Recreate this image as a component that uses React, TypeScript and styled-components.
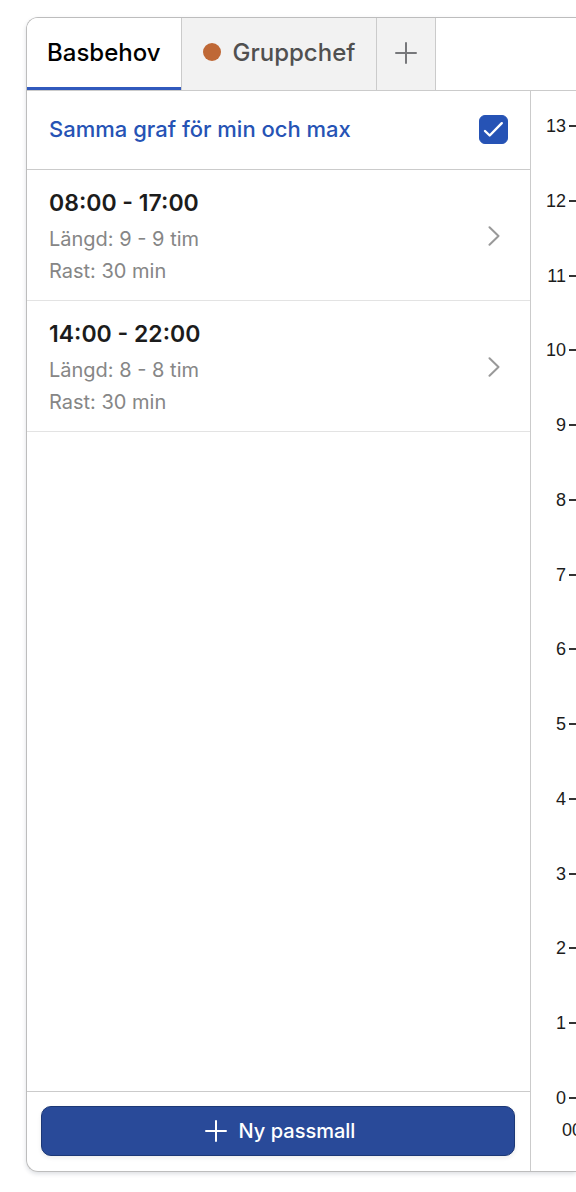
import React, { useState } from 'react';
import styled, { createGlobalStyle } from 'styled-components';

const colors = {
  text: '#1c1c1c',
  muted: '#868686',
  icon: '#999999',
  line: '#cbcbcb',
  lineLight: '#e3e3e3',
  frame: '#bdbdbd',
  tab: '#f2f2f2',
  blue: '#2653b5',
  button: '#294a99',
};

const GlobalStyle = createGlobalStyle`
  *, *::before, *::after {
    box-sizing: border-box;
  }

  body {
    margin: 0;
    background: #fff;
    color: ${colors.text};
    font-family: Inter, 'Liberation Sans', sans-serif;
  }

  button, input {
    font: inherit;
  }
`;

const Page = styled.main`
  display: flex;
  min-height: 100vh;
  padding: 17px 0 20px 26px;
  overflow: hidden;
`;

const Panel = styled.section`
  flex: 1;
  min-width: 0;
  display: flex;
  flex-direction: column;
  border: 1px solid ${colors.frame};
  border-right: none;
  border-radius: 12px 0 0 12px;
  box-shadow: 0 2px 4px rgba(30, 40, 70, 0.15);
`;

const TabBar = styled.div`
  display: flex;
  height: 73px;
  border-bottom: 1px solid ${colors.line};
`;

const Tab = styled.button<{ $active?: boolean }>`
  display: flex;
  align-items: center;
  gap: 12px;
  padding: 0 21px 4px;
  border: none;
  border-right: 1px solid ${colors.line};
  background: ${({ $active }) => ($active ? '#fff' : colors.tab)};
  box-shadow: ${({ $active }) => ($active ? `inset 0 -3px 0 #3159bd` : 'none')};
  color: ${({ $active }) => ($active ? '#000' : '#505050')};
  font-size: 24px;
  font-weight: 500;
  cursor: pointer;

  &:first-child {
    padding: 0 20px 4px;
    border-top-left-radius: 11px;
  }
`;

const AddTab = styled(Tab)`
  padding: 0 18px 2px;
  color: #77787b;
`;

const Dot = styled.span`
  width: 18px;
  height: 18px;
  border-radius: 50%;
  background: #bf6836;
`;

const Content = styled.div`
  flex: 1;
  display: grid;
  grid-template-columns: minmax(0, 504px) minmax(45px, 1fr);
`;

const Sidebar = styled.div`
  display: flex;
  flex-direction: column;
  border-right: 1px solid ${colors.line};
`;

const GraphOption = styled.label`
  display: flex;
  align-items: center;
  justify-content: space-between;
  height: 79px;
  padding: 0 22px 2px;
  border-bottom: 1px solid ${colors.line};
  color: ${colors.blue};
  font-size: 22px;
  font-weight: 500;
  cursor: pointer;
`;

const CheckWrap = styled.span`
  display: grid;
  place-items: center;
  width: 29px;
  height: 29px;

  > * {
    grid-area: 1 / 1;
  }

  svg {
    pointer-events: none;
  }
`;

const Checkbox = styled.input`
  appearance: none;
  width: 29px;
  height: 29px;
  margin: 0;
  border: 1px solid ${colors.blue};
  border-radius: 6px;
  background: #fff;
  cursor: pointer;

  &:checked {
    background: ${colors.blue};
  }
`;

const ShiftList = styled.ul`
  flex: 1;
  margin: 0;
  padding: 0;
  list-style: none;
`;

const ShiftRow = styled.button`
  display: flex;
  align-items: center;
  justify-content: space-between;
  width: 100%;
  padding: 14px 30px 13px 22px;
  border: none;
  border-bottom: 1px solid ${colors.lineLight};
  background: none;
  color: ${colors.icon};
  text-align: left;
  cursor: pointer;
`;

const ShiftText = styled.span`
  display: flex;
  flex-direction: column;
`;

const ShiftTime = styled.span`
  margin-bottom: 1px;
  color: ${colors.text};
  font-size: 23px;
  font-weight: 600;
  line-height: 38px;
`;

const ShiftMeta = styled.span`
  color: ${colors.muted};
  font-size: 20px;
  line-height: 32px;
`;

const Footer = styled.div`
  padding: 14px 15px 15px 14px;
  border-top: 1px solid ${colors.line};
`;

const NewButton = styled.button`
  display: flex;
  align-items: center;
  justify-content: center;
  gap: 12px;
  width: 100%;
  height: 50px;
  padding: 0 8px 0 12px;
  border: 1px solid #1c3876;
  border-radius: 10px;
  background: ${colors.button};
  box-shadow: 0 2px 4px rgba(30, 20, 30, 0.08);
  color: #fff;
  font-size: 20px;
  font-weight: 500;
  cursor: pointer;
`;

const Chart = styled.div`
  display: flex;
  flex-direction: column;
  padding-top: 25px;
  overflow: hidden;
  font-family: 'Liberation Sans', Arial, sans-serif;
  font-size: 18px;
  line-height: 20px;
`;

const Axis = styled.ol`
  flex: 1;
  display: flex;
  flex-direction: column;
  justify-content: space-between;
  margin: 0;
  padding: 0;
  list-style: none;
`;

const AxisLabel = styled.li`
  display: grid;
  grid-template-columns: 35px 1fr;
  align-items: center;
  column-gap: 3px;
  text-align: right;

  &::after {
    content: '';
    height: 2px;
    background: #333;
  }
`;

const Hours = styled.div`
  padding: 12px 0 31px 31px;
`;

const PlusIcon = () => (
  <svg width="22" height="22" viewBox="0 0 22 22" fill="none" stroke="currentColor" strokeWidth="2" strokeLinecap="round" aria-hidden="true">
    <path d="M11 1v20M1 11h20" />
  </svg>
);

const CheckIcon = () => (
  <svg width="29" height="29" viewBox="0 0 29 29" fill="none" stroke="#fff" strokeWidth="2.4" strokeLinecap="round" strokeLinejoin="round" aria-hidden="true">
    <path d="M6 16l4.7 4.5L22.8 8.2" />
  </svg>
);

const ChevronIcon = () => (
  <svg width="12" height="20" viewBox="0 0 12 20" fill="none" stroke="currentColor" strokeWidth="2" strokeLinecap="round" strokeLinejoin="round" aria-hidden="true">
    <path d="M1.5 1.2L10.5 10l-9 8.8" />
  </svg>
);

const shifts = [
  { time: '08:00 - 17:00', length: '9 - 9 tim', rest: '30 min' },
  { time: '14:00 - 22:00', length: '8 - 8 tim', rest: '30 min' },
];

const levels = Array.from({ length: 14 }, (_, i) => 13 - i);

const App: React.FC = () => {
  const [sameGraph, setSameGraph] = useState(true);
  const [tab, setTab] = useState('Basbehov');

  return (
    <>
      <GlobalStyle />
      <Page>
        <Panel>
          <TabBar role="tablist">
            <Tab role="tab" aria-selected={tab === 'Basbehov'} $active={tab === 'Basbehov'} onClick={() => setTab('Basbehov')}>
              Basbehov
            </Tab>
            <Tab role="tab" aria-selected={tab === 'Gruppchef'} $active={tab === 'Gruppchef'} onClick={() => setTab('Gruppchef')}>
              <Dot />
              Gruppchef
            </Tab>
            <AddTab aria-label="Lägg till">
              <PlusIcon />
            </AddTab>
          </TabBar>

          <Content>
            <Sidebar>
              <GraphOption>
                Samma graf för min och max
                <CheckWrap>
                  <Checkbox type="checkbox" checked={sameGraph} onChange={e => setSameGraph(e.target.checked)} />
                  {sameGraph && <CheckIcon />}
                </CheckWrap>
              </GraphOption>

              <ShiftList>
                {shifts.map(shift => (
                  <li key={shift.time}>
                    <ShiftRow>
                      <ShiftText>
                        <ShiftTime>{shift.time}</ShiftTime>
                        <ShiftMeta>Längd: {shift.length}</ShiftMeta>
                        <ShiftMeta>Rast: {shift.rest}</ShiftMeta>
                      </ShiftText>
                      <ChevronIcon />
                    </ShiftRow>
                  </li>
                ))}
              </ShiftList>

              <Footer>
                <NewButton>
                  <PlusIcon />
                  Ny passmall
                </NewButton>
              </Footer>
            </Sidebar>

            <Chart>
              <Axis>
                {levels.map(level => (
                  <AxisLabel key={level}>{level}</AxisLabel>
                ))}
              </Axis>
              <Hours>00</Hours>
            </Chart>
          </Content>
        </Panel>
      </Page>
    </>
  );
};

export default App;
